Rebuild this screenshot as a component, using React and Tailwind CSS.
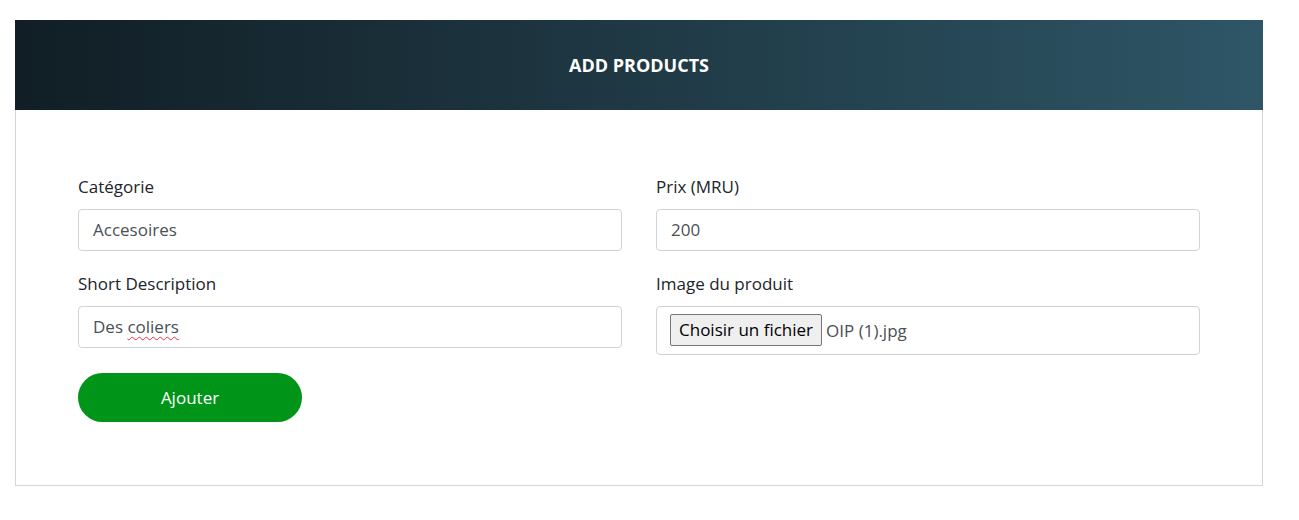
import React from 'react';

const Field = ({ label, value, underline }) => (
  <div className="flex flex-col">
    <label className="mb-[10px] text-[17px] leading-6 text-[#212529]">{label}</label>
    <div className="h-[42px] rounded border border-[#ced4da] bg-white px-[14px] flex items-center text-[17px] text-[#495057]">
      {underline ? (
        <span>
          Des <span className="underline decoration-wavy decoration-red-500 decoration-1 underline-offset-[3px]">coliers</span>
        </span>
      ) : (
        value
      )}
    </div>
  </div>
);

const App = () => {
  return (
    <div className="min-h-screen bg-white font-['Open_Sans',sans-serif] pt-5 pl-[15px] pr-9">
      <div className="w-[1248px]">
        {/* header */}
        <div className="h-[90px] bg-linear-to-r from-[#111e25] to-[#2e5667] flex items-center justify-center">
          <h1 className="text-white font-bold text-[18px] uppercase">Add Products</h1>
        </div>

        {/* form */}
        <div className="border-x border-b border-[#d2d6dc] px-[62px] pt-[65px] pb-[63px]">
          <div className="grid grid-cols-2 gap-x-[34px] gap-y-[21px] items-start">
            <Field label="Catégorie" value="Accesoires" />
            <Field label="Prix (MRU)" value="200" />
            <Field label="Short Description" underline />
            <div className="flex flex-col">
              <label className="mb-[10px] text-[17px] leading-6 text-[#212529]">Image du produit</label>
              <div className="h-[49px] rounded border border-[#ced4da] bg-white pl-[13px] flex items-center gap-[4px] text-[17px]">
                <span className="h-[32px] mb-[1px] px-[8px] flex items-center rounded-[2px] border border-[#767676] bg-[#efefef] text-black">
                  Choisir un fichier
                </span>
                <span className="text-[#495057]">OIP (1).jpg</span>
              </div>
            </div>
          </div>

          <button className="mt-[18px] w-[224px] h-[49px] rounded-full bg-[#009418] text-white text-[17px]">
            Ajouter
          </button>
        </div>
      </div>
    </div>
  );
};

export default App;
